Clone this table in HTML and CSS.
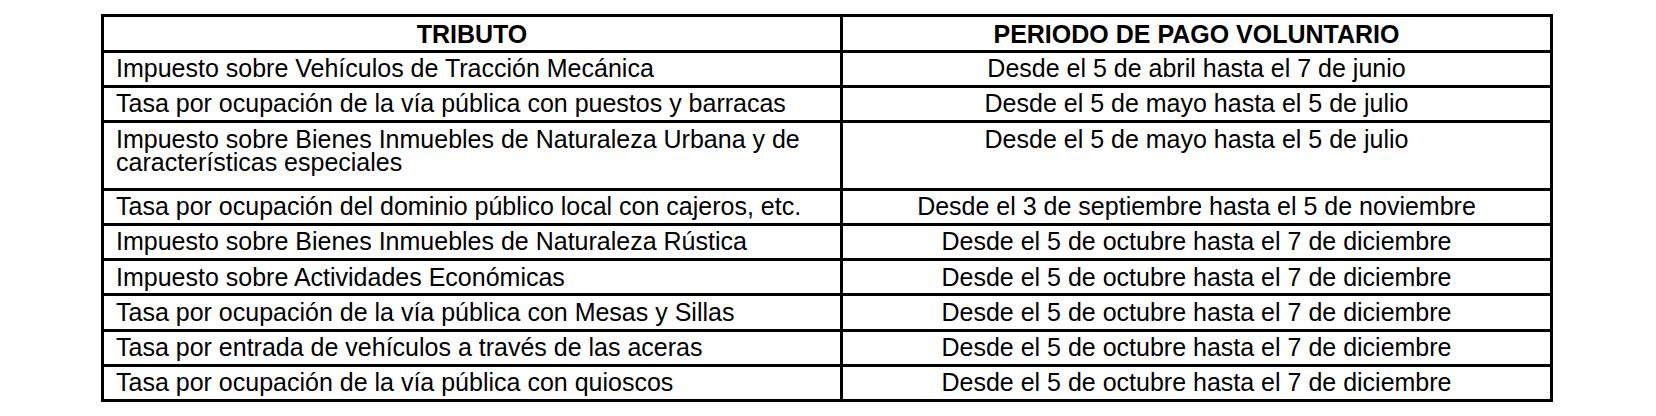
FILE: index.html
```html
<!DOCTYPE html>
<html lang="es">
<head>
<meta charset="utf-8">
<title>Periodos de pago voluntario</title>
<link rel="stylesheet" href="styles.css">
</head>
<body>
<div class="page">
  <table class="tributos">
    <colgroup>
      <col class="col-tributo">
      <col class="col-periodo">
    </colgroup>
    <thead>
      <tr>
        <th>TRIBUTO</th>
        <th>PERIODO DE PAGO VOLUNTARIO</th>
      </tr>
    </thead>
    <tbody>
      <tr>
        <td>Impuesto sobre Vehículos de Tracción Mecánica</td>
        <td class="periodo">Desde el 5 de abril hasta el 7 de junio</td>
      </tr>
      <tr>
        <td>Tasa por ocupación de la vía pública con puestos y barracas</td>
        <td class="periodo">Desde el 5 de mayo hasta el 5 de julio</td>
      </tr>
      <tr class="doble">
        <td><span class="linea">Impuesto sobre Bienes Inmuebles de Naturaleza Urbana y de</span><span class="linea">características especiales</span></td>
        <td class="periodo">Desde el 5 de mayo hasta el 5 de julio</td>
      </tr>
      <tr>
        <td>Tasa por ocupación del dominio público local con cajeros, etc.</td>
        <td class="periodo">Desde el 3 de septiembre hasta el 5 de noviembre</td>
      </tr>
      <tr>
        <td>Impuesto sobre Bienes Inmuebles de Naturaleza Rústica</td>
        <td class="periodo">Desde el 5 de octubre hasta el 7 de diciembre</td>
      </tr>
      <tr>
        <td>Impuesto sobre Actividades Económicas</td>
        <td class="periodo">Desde el 5 de octubre hasta el 7 de diciembre</td>
      </tr>
      <tr>
        <td>Tasa por ocupación de la vía pública con Mesas y Sillas</td>
        <td class="periodo">Desde el 5 de octubre hasta el 7 de diciembre</td>
      </tr>
      <tr>
        <td>Tasa por entrada de vehículos a través de las aceras</td>
        <td class="periodo">Desde el 5 de octubre hasta el 7 de diciembre</td>
      </tr>
      <tr>
        <td>Tasa por ocupación de la vía pública con quioscos</td>
        <td class="periodo">Desde el 5 de octubre hasta el 7 de diciembre</td>
      </tr>
    </tbody>
  </table>
</div>
</body>
</html>
```
FILE: styles.css
```css
html, body {
  margin: 0;
  padding: 0;
  background: #ffffff;
}

.page {
  padding: 14px 0 0 101px;
}

.tributos {
  border-collapse: collapse;
  width: 1449px;
  table-layout: fixed;
  font-family: "Liberation Sans", Arial, sans-serif;
  color: #000;
}

.col-tributo { width: 739px; }
.col-periodo { width: 710px; }

.tributos th,
.tributos td {
  border: 3px solid #000;
  vertical-align: top;
  white-space: nowrap;
}

.tributos th {
  font-size: 25px;
  font-weight: bold;
  text-align: center;
  line-height: 23px;
  padding: 5.5px 0 4px;
}

.tributos td {
  font-size: 25px;
  line-height: 23px;
  padding: 4.5px 8px 4.75px 12px;
  text-align: left;
}

.tributos .linea {
  display: block;
}

.tributos tr.doble td {
  padding-bottom: 14px;
}

.tributos td.periodo {
  text-align: center;
  padding-left: 8px;
}
```
